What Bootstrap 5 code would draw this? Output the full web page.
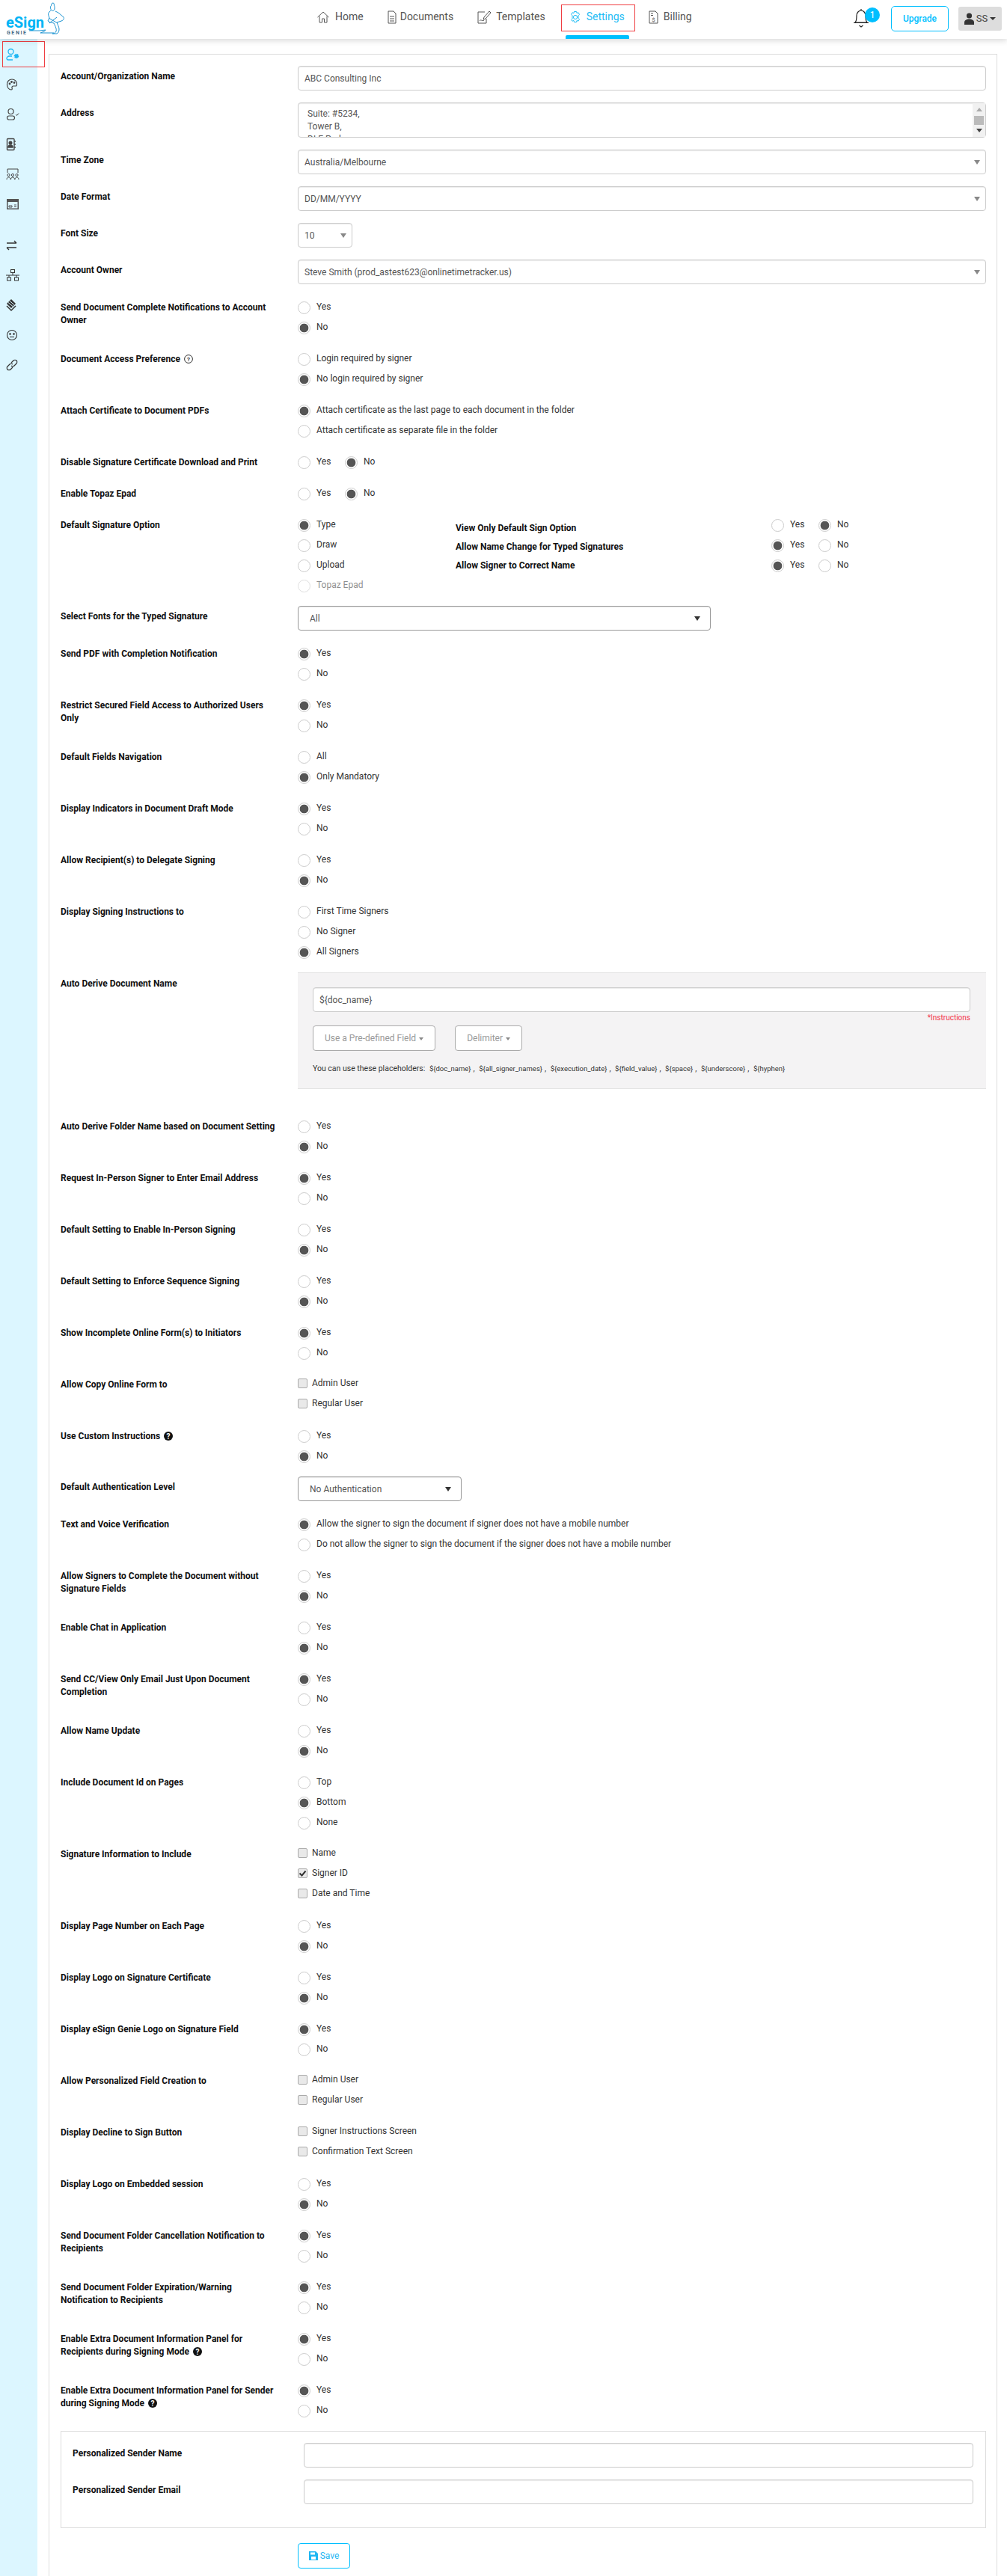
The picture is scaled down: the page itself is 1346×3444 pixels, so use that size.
<!DOCTYPE html>
<html lang="en">
<head>
<meta charset="UTF-8">
<title>eSign Genie - Settings</title>
<link href="https://cdn.jsdelivr.net/npm/bootstrap@5.3.0/dist/css/bootstrap.min.css" rel="stylesheet">
<style>
  body { font-family: Roboto, "Liberation Sans", sans-serif; font-size: 12px; color: #555; background: #fff; width: 1346px; height: 3444px; overflow: hidden; }
  .top-bar { height: 52px; padding: 0; background: #fff; box-shadow: 0 2px 8px rgba(0,0,0,.16); position: relative; z-index: 5; flex-wrap: nowrap; justify-content: flex-start; }
  .brand-box { width: 423px; height: 52px; flex: none; position: relative; }
  .brand-word { position: absolute; left: 8px; top: 16px; font-size: 20px; font-weight: 700; color: #00b4f5; line-height: 28px; }
  .brand-sub { position: absolute; left: 9px; top: 40px; font-size: 7px; font-weight: 700; color: #4a6f8a; letter-spacing: 1.6px; line-height: 8px; }
  .brand-genie { position: absolute; left: 38px; top: 3px; }
  .main-links { gap: 32px; flex-direction: row; flex-wrap: nowrap; }
  .main-links .nav-link { padding: 0 0 7px; height: 52px; display: flex; align-items: center; gap: 7px; color: #555; font-size: 14px; position: relative; }
  .main-links .nav-link svg { flex: none; }
  .main-links .nav-link.on { color: #1fbdf5; }
  .main-links .nav-link.on::before { content: ""; position: absolute; left: -11px; right: -14px; top: 6px; height: 36px; border: 1px solid #ef3e42; }
  .main-links .nav-link.on::after { content: ""; position: absolute; left: -5px; right: -6px; bottom: 0; height: 5px; background: #00bfff; border-radius: 2px 2px 0 0; }
  .bell-wrap { position: absolute; left: 1140px; top: 11px; width: 24px; height: 26px; }
  .bell-count { position: absolute; left: 16px; top: -1px; width: 20px; height: 20px; border-radius: 50%; background: #00bfff; color: #fff; font-size: 12px; line-height: 20px; text-align: center; }
  .upgrade-btn { position: absolute; left: 1191px; top: 8px; width: 77px; height: 34px; padding: 0; font-size: 12px; font-weight: 500; color: #00bfff; border: 1px solid #00bfff; border-radius: 5px; background: #fff; }
  .who-btn { position: absolute; left: 1281px; top: 9px; width: 58px; height: 32px; padding: 0; display: flex; align-items: center; justify-content: center; gap: 3px; font-size: 13px; color: #444; background: #ddd; border: 0; border-radius: 3px; }
  .who-btn::after { content: ""; border-top: 4px solid #333; border-left: 4px solid transparent; border-right: 4px solid transparent; }
  .side-rail { width: 50px; flex: none; background: #dcf6ff; padding-top: 1px; position: relative; }
  .rail-item { height: 40px; display: flex; align-items: center; padding-left: 8px; color: #444; position: relative; }
  .rail-item.on { color: #1fb6f2; }
  .rail-item.on::before { content: ""; position: absolute; left: 3px; top: 2px; width: 57px; height: 35px; border: 1px solid #ef3e42; }
  .rail-item.gap-after { margin-bottom: 15px; }
  .work-area { flex: 1; padding: 20px 13px 0 15px; min-width: 0; }
  .cfg-panel { border: 1px solid #ddd; border-bottom: 0; padding: 17px 14px 0 15px; height: 3400px; }
  .cfg-row { display: flex; margin-bottom: 15px; }
  .cfg-row.with-field { margin-top: -2px; margin-bottom: 18px; }
  .cfg-name { width: 317px; flex: none; padding: 5px 29px 0 0; font-weight: 700; font-size: 12px; line-height: 17px; color: #111; margin: 0; }
  .with-field .cfg-name { padding-top: 6px; }
  .cfg-body { flex: 1; min-width: 0; }
  .opt-line { display: flex; align-items: center; gap: 8px; height: 27px; min-height: 0; padding: 0; margin: 0; color: #333; }
  .opt-line .form-check-input { float: none; margin: 0; flex: none; }
  .opt-line .form-check-label { line-height: 17px; position: relative; top: -1px; }
  .opt-line input[type=radio] { width: 17px; height: 17px; border: 1px solid #ccc; background: #fff; }
  .opt-line input[type=radio]:checked { background: radial-gradient(circle, #555 0, #555 5.500px, #fff 6.200px); border-color: #ccc; }
  .opt-line input[type=radio]:disabled { opacity: .6; }
  .opt-line input[type=radio]:disabled ~ label { opacity: .55; }
  .opt-line.tick-line { gap: 6px; }
  .opt-line input[type=checkbox] { width: 13px; height: 13px; margin-top: -4px; border: 1px solid #aaa; border-radius: 2px; background-color: #e9e9e9; }
  .opt-line input[type=checkbox]:checked { background-color: #e9e9e9; border-color: #aaa; background-size: 13px; background-image: url("data:image/svg+xml,%3Csvg xmlns='http://www.w3.org/2000/svg' viewBox='0 0 13 13'%3E%3Cpath d='M2.500 6.500l3 3 5-6' fill='none' stroke='%23333' stroke-width='2'/%3E%3C/svg%3E"); }
  .tick-line .form-check-label { top: -2px; }
  .opt-across { display: flex; }
  .opt-across .opt-line { width: 63px; }
  .cfg-input, .cfg-select { height: 33px; padding: 0 8px; font-size: 12px; color: #555; border: 1px solid #ccc; border-radius: 4px; box-shadow: inset 0 1px 1px rgba(0,0,0,.08); }
  .cfg-select { background-image: url("data:image/svg+xml,%3Csvg xmlns='http://www.w3.org/2000/svg' width='8' height='6'%3E%3Cpath d='M0 0h8L4 6z' fill='%23888'/%3E%3C/svg%3E"); background-position: right 7px center; background-size: 8px 6px; padding-right: 20px; }
  .cfg-select.dark { background-image: url("data:image/svg+xml,%3Csvg xmlns='http://www.w3.org/2000/svg' width='8' height='6'%3E%3Cpath d='M0 0h8L4 6z' fill='%23333'/%3E%3C/svg%3E"); border-color: #999; padding-left: 15px; background-position: right 13px center; }
  .cfg-text { height: 47px; padding: 6px 12px; line-height: 17px; font-size: 12px; color: #555; border: 1px solid #ccc; border-radius: 4px; box-shadow: inset 0 1px 1px rgba(0,0,0,.08); resize: none; overflow: hidden; }
  .fake-scroll { position: absolute; right: 1px; top: 1px; bottom: 1px; width: 17px; background: #f1f1f1; }
  .fake-scroll i { position: absolute; left: 2px; top: 17px; width: 13px; height: 12px; background: #bbb; }
  .fake-scroll::before { content: ""; position: absolute; left: 5px; top: 6px; border-bottom: 5px solid #aaa; border-left: 4px solid transparent; border-right: 4px solid transparent; }
  .fake-scroll::after { content: ""; position: absolute; left: 5px; bottom: 6px; border-top: 5px solid #444; border-left: 4px solid transparent; border-right: 4px solid transparent; }
  .w-font { width: 73px; }
  .w-fonts { width: 552px; }
  .w-auth { width: 219px; }
  .sign-extra { display: flex; }
  .sign-types { width: 211px; flex: none; }
  .sign-names { width: 422px; flex: none; padding-top: 9px; font-weight: 700; color: #111; line-height: 17px; }
  .sign-names div { height: 25px; }
  .cfg-row.derive-row { margin-bottom: 37px; }
  .derive-row .cfg-name { padding-top: 7px; }
  .derive-box { height: 156px; padding: 19px 21px 0 20px; background: #f4f3f4; border: 1px solid #e3e3e3; border-width: 1px 0; }
  .derive-note { text-align: right; color: #f3334a; font-size: 10px; line-height: 14px; margin-top: 1px; }
  .derive-btn { height: 34px; padding: 0 15px; margin-right: 26px; margin-top: 3px; font-size: 12px; color: #999; background: #fff; border: 1px solid #aaa; border-radius: 4px; white-space: nowrap; }
  .derive-btn::after { content: ""; display: inline-block; margin-left: 4px; vertical-align: 1px; border-top: 4px solid #888; border-left: 3px solid transparent; border-right: 3px solid transparent; }
  .derive-tips { font-size: 10.500px; color: #333; line-height: 14px; margin-top: 17px; white-space: nowrap; }
  .derive-tips span { font-size: 9.500px; margin-left: 3px; margin-right: 3px; }
  .sender-box { border: 1px solid #ddd; height: 130px; padding: 17px 16px 0 15px; margin-top: -2px; }
  .sender-box .cfg-name { width: 309px; }
  .save-btn { display: flex; align-items: center; justify-content: center; gap: 3px; width: 70px; height: 34px; padding: 0; margin: 20px 0 0 317px; font-size: 12px; color: #1fb6f2; border: 1px solid #00bfff; border-radius: 4px; background: #fff; }
  .hint-ico { vertical-align: -2px; margin-left: 2px; }
</style>
</head>
<body>

<nav class="navbar top-bar">
  <div class="brand-box">
    <span class="brand-word">eSign</span>
    <span class="brand-sub">GENIE</span>
    <svg class="brand-genie" width="50" height="43" viewBox="0 0 50 43" fill="none" stroke="#1b93d1" stroke-width="1"><path d="M33 1c-2 0-3 2-2 3-2 1-2 5 0 7 2 1 4 0 4-3 0-2 0-3-1-4 1-1 0-3-1-3zM30 11l-3 3c-1 2 0 4 1 7l-2 4c2 2 5 2 8 3 2 4 4 8 3 11-1 2-3 3-5 3h6c2-1 3-3 3-6 0-3-2-6-3-9l6-2c3-1 4-3 3-5l-7-6-4-2M27 21l12 7M28 28l10-8"/><path d="M1 38h14l8-1-2 2-5 2h18"/></svg>
  </div>
  <ul class="nav main-links">
    <li class="nav-item"><a class="nav-link" href="#"><svg width="18" height="18" viewBox="0 0 18 18" fill="none" stroke="currentColor"><path d="M1.500 9L9 2l7.500 7M4 7.500V16h3.500v-5h3v5H14V7.500"/></svg>Home</a></li>
    <li class="nav-item"><a class="nav-link" href="#"><svg width="12" height="18" viewBox="0 0 12 18" fill="none" stroke="currentColor" style="margin-right:-2px"><path d="M1 1h7l3 3v13H1zM3 8h6M3 11h6M3 14h6"/></svg>Documents</a></li>
    <li class="nav-item"><a class="nav-link" href="#"><svg width="18" height="18" viewBox="0 0 18 18" fill="none" stroke="currentColor"><path d="M10 2H1v15h11v-6M16 1l-7 8-1 3 3-1 7-8zM3 14c2-3 3 1 6-1"/></svg>Templates</a></li>
    <li class="nav-item"><a class="nav-link on" href="#"><svg width="16" height="18" viewBox="0 0 16 18" fill="none" stroke="currentColor"><circle cx="8" cy="9" r="2.600"/><path d="M6.500 1.500h3l.5 2 2-.7 1.500 2.500-1.500 1.500v3.400l1.500 1.500-1.500 2.500-2-.7-.5 2h-3l-.5-2-2 .7L2.500 12.700 4 11.200V6.800L2.500 5.300 4 2.800l2 .7z"/></svg>Settings</a></li>
    <li class="nav-item"><a class="nav-link" href="#"><svg width="13" height="18" viewBox="0 0 13 18" fill="none" stroke="currentColor"><path d="M1 1h8l3 3v13H1zM3 4h3M3 6.500h3"/><text x="6.500" y="14.500" font-size="8" fill="currentColor" stroke="none" text-anchor="middle">$</text></svg>Billing</a></li>
  </ul>
  <div class="bell-wrap">
    <svg width="24" height="26" viewBox="0 0 24 26" fill="none" stroke="#222" stroke-width="1.200"><path d="M11 1v2M3 19c2-2 2-5 2-9s3-7 6-7 6 3 6 7 0 7 2 9zM1 19.500h20M8.500 23l2.500 2 2.500-2"/></svg>
    <span class="bell-count">1</span>
  </div>
  <button class="upgrade-btn btn" type="button">Upgrade</button>
  <button class="who-btn btn" type="button"><svg width="13" height="16" viewBox="0 0 13 16" fill="#333"><circle cx="6.500" cy="4" r="3.600"/><path d="M0 16v-3c0-3 3-4.500 6.500-4.500S13 10 13 13v3z"/></svg>SS</button>
</nav>

<div class="d-flex" style="min-height:3392px">
  <aside class="side-rail">
    <div class="rail-item on"><svg width="18" height="18" viewBox="0 0 18 18" fill="none" stroke="currentColor" stroke-width="1.300"><circle cx="6.500" cy="5" r="3.500"/><path d="M9 16H3c-1.500 0-2-1-2-2s1-3 4-3h3"/><circle cx="14" cy="11" r="2.500" fill="currentColor" stroke-width="1.500" stroke-dasharray="1.500 1"/></svg></div>
    <div class="rail-item"><svg width="16" height="18" viewBox="0 0 16 18" fill="none" stroke="currentColor" stroke-width="1.200"><path d="M8 2C4 2 1.500 5 1.500 9S4 16 7 16c1.500 0 1.500-1.500 1-2.500S8.500 11 10 11h3c1 0 1.500-1 1.500-2.500C14.500 5 12 2 8 2z"/><circle cx="5" cy="8" r=".8" fill="currentColor"/><circle cx="7.500" cy="5.500" r=".8" fill="currentColor"/><circle cx="11" cy="6.500" r=".8" fill="currentColor"/></svg></div>
    <div class="rail-item"><svg width="18" height="18" viewBox="0 0 18 18" fill="none" stroke="currentColor" stroke-width="1.200"><circle cx="6.500" cy="5" r="3.500"/><rect x="1.500" y="11" width="10" height="5" rx="2.500"/><path d="M13 9l1.500 1.500L17 7.500" stroke-width="1"/></svg></div>
    <div class="rail-item"><svg width="14" height="18" viewBox="0 0 14 18" fill="none" stroke="currentColor" stroke-width="1.400"><rect x="1.500" y="1.500" width="9.500" height="15" rx="1"/><circle cx="6" cy="7" r="1.800" fill="currentColor"/><path d="M3 13c0-4 6-4 6 0z" fill="currentColor"/><path d="M12 4v2M12 8v2M12 12v2"/></svg></div>
    <div class="rail-item"><svg width="18" height="18" viewBox="0 0 18 18" fill="none" stroke="currentColor"><path d="M2 7V2h14v5"/><circle cx="3.500" cy="10" r="1.600"/><circle cx="9" cy="10" r="1.600"/><circle cx="14.500" cy="10" r="1.600"/><path d="M1 16c0-4 5-4 5 0M6.500 16c0-4 5-4 5 0M12 16c0-4 5-4 5 0"/></svg></div>
    <div class="rail-item gap-after"><svg width="18" height="18" viewBox="0 0 18 18" fill="none" stroke="currentColor"><rect x="1.500" y="2.500" width="15" height="13" fill="#555" stroke="#555"/><rect x="2.500" y="6" width="13" height="8.500" fill="#dcf6ff" stroke="none"/><path d="M4 11h4v2H4zM11 10h3M11 12.500h3" stroke="#555"/></svg></div>
    <div class="rail-item"><svg width="16" height="16" viewBox="0 0 16 16" fill="none" stroke="#333" stroke-width="1.400"><path d="M1 5h13M11 2l3 3M1 11h13M4 14l-3-3"/></svg></div>
    <div class="rail-item"><svg width="18" height="18" viewBox="0 0 18 18" fill="none" stroke="#333"><rect x="6.500" y="1.500" width="5" height="4"/><rect x="1.500" y="12" width="5" height="4"/><rect x="11.500" y="12" width="5" height="4"/><path d="M9 5.500V9M0 9h18M4 9v3M14 9v3"/></svg></div>
    <div class="rail-item"><svg width="14" height="18" viewBox="0 0 14 18" fill="#333"><path d="M7 1l6 6-6 6-6-6z"/><path d="M1 10l6 6 6-6" fill="none" stroke="#333" stroke-width="1.500"/><path d="M3 5.500l6 5M5 3.500l6 5" stroke="#dcf6ff"/></svg></div>
    <div class="rail-item"><svg width="16" height="16" viewBox="0 0 16 16" fill="none" stroke="#333" stroke-width="1.100"><circle cx="8" cy="8" r="6.500"/><circle cx="5.500" cy="6.500" r=".8" fill="#333"/><circle cx="10.500" cy="6.500" r=".8" fill="#333"/><path d="M5 10.500h6"/></svg></div>
    <div class="rail-item"><svg width="16" height="16" viewBox="0 0 16 16" fill="none" stroke="#333" stroke-width="1.200"><path d="M7 5l3-3c1-1 3-1 4 0s1 3 0 4l-3 3c-1 1-3 1-4 0M9 11l-3 3c-1 1-3 1-4 0s-1-3 0-4l3-3c1-1 3-1 4 0"/></svg></div>
  </aside>

  <main class="work-area">
    <form class="cfg-panel" id="cfgForm" onsubmit="return false"></form>
  </main>
</div>

<script src="https://cdn.jsdelivr.net/npm/bootstrap@5.3.0/dist/js/bootstrap.bundle.min.js"></script>
<script>
  const ringHelp = '<svg class="hint-ico" width="12" height="12" viewBox="0 0 12 12"><circle cx="6" cy="6" r="5.400" fill="none" stroke="#333"/><text x="6" y="9" font-size="8" text-anchor="middle" fill="#333">?</text></svg>';
  const solidHelp = '<svg class="hint-ico" width="12" height="12" viewBox="0 0 12 12"><circle cx="6" cy="6" r="6" fill="#111"/><text x="6" y="9.500" font-size="10" font-weight="700" text-anchor="middle" fill="#fff">?</text></svg>';
  const yesNo = ['Yes', 'No'];
  let uid = 0;

  // one radio or checkbox line
  function opt(text, on, kind, off) {
    const id = 'o' + (++uid);
    return `<div class="form-check opt-line ${kind === 'checkbox' ? 'tick-line' : ''}">
      <input class="form-check-input" type="${kind}" id="${id}" name="g${kind === 'radio' ? opt.group : id}" ${on ? 'checked' : ''} ${off ? 'disabled' : ''}>
      <label class="form-check-label" for="${id}">${text}</label></div>`;
  }
  function radios(list, on, across) {
    opt.group = ++uid;
    const body = list.map((t, i) => opt(t, i === on, 'radio', t === 'Topaz Epad')).join('');
    return across ? `<div class="opt-across">${body}</div>` : body;
  }
  function ticks(list, on) {
    return list.map((t, i) => opt(t, i === on, 'checkbox')).join('');
  }
  function row(name, body, field) {
    return `<div class="cfg-row ${field ? 'with-field' : ''}"><label class="cfg-name">${name}</label><div class="cfg-body">${body}</div></div>`;
  }
  function pick(text, extra) {
    return `<select class="form-select cfg-select ${extra || ''}"><option>${text}</option></select>`;
  }

  const fields = [
    row('Account/Organization Name', '<input class="form-control cfg-input" value="ABC Consulting Inc">', 1),
    row('Address', '<div class="position-relative"><textarea class="form-control cfg-text">Suite: #5234,\nTower B,\nDLF Park</textarea><div class="fake-scroll"><i></i></div></div>', 1),
    row('Time Zone', pick('Australia/Melbourne'), 1),
    row('Date Format', pick('DD/MM/YYYY'), 1),
    row('Font Size', pick('10', 'w-font'), 1),
    row('Account Owner', pick('Steve Smith (prod_astest623@onlinetimetracker.us)'), 1),
    row('Send Document Complete Notifications to Account Owner', radios(yesNo, 1)),
    row('Document Access Preference ' + ringHelp, radios(['Login required by signer', 'No login required by signer'], 1)),
    row('Attach Certificate to Document PDFs', radios(['Attach certificate as the last page to each document in the folder', 'Attach certificate as separate file in the folder'], 0)),
    row('Disable Signature Certificate Download and Print', radios(yesNo, 1, true)),
    row('Enable Topaz Epad', radios(yesNo, 1, true)),
    row('Default Signature Option', `<div class="sign-extra">
      <div class="sign-types">${radios(['Type', 'Draw', 'Upload', 'Topaz Epad'], 0)}</div>
      <div class="sign-names"><div>View Only Default Sign Option</div><div>Allow Name Change for Typed Signatures</div><div>Allow Signer to Correct Name</div></div>
      <div>${radios(yesNo, 1, true)}${radios(yesNo, 0, true)}${radios(yesNo, 0, true)}</div></div>`),
    row('Select Fonts for the Typed Signature', pick('All', 'w-fonts dark'), 1),
    row('Send PDF with Completion Notification', radios(yesNo, 0)),
    row('Restrict Secured Field Access to Authorized Users Only', radios(yesNo, 0)),
    row('Default Fields Navigation', radios(['All', 'Only Mandatory'], 1)),
    row('Display Indicators in Document Draft Mode', radios(yesNo, 0)),
    row('Allow Recipient(s) to Delegate Signing', radios(yesNo, 1)),
    row('Display Signing Instructions to', radios(['First Time Signers', 'No Signer', 'All Signers'], 2)),
    `<div class="cfg-row with-field derive-row"><label class="cfg-name">Auto Derive Document Name</label><div class="cfg-body"><div class="derive-box">
      <input class="form-control cfg-input" value="\${doc_name}">
      <div class="derive-note">*Instructions</div>
      <div class="d-flex"><button class="btn derive-btn" type="button">Use a Pre-defined Field</button><button class="btn derive-btn" type="button">Delimiter</button></div>
      <div class="derive-tips">You can use these placeholders: <span>\${doc_name}</span>, <span>\${all_signer_names}</span>, <span>\${execution_date}</span>, <span>\${field_value}</span>, <span>\${space}</span>, <span>\${underscore}</span>, <span>\${hyphen}</span></div>
    </div></div></div>`,
    row('Auto Derive Folder Name based on Document Setting', radios(yesNo, 1)),
    row('Request In-Person Signer to Enter Email Address', radios(yesNo, 0)),
    row('Default Setting to Enable In-Person Signing', radios(yesNo, 1)),
    row('Default Setting to Enforce Sequence Signing', radios(yesNo, 1)),
    row('Show Incomplete Online Form(s) to Initiators', radios(yesNo, 0)),
    row('Allow Copy Online Form to', ticks(['Admin User', 'Regular User'])),
    row('Use Custom Instructions ' + solidHelp, radios(yesNo, 1)),
    row('Default Authentication Level', pick('No Authentication', 'w-auth dark'), 1),
    row('Text and Voice Verification', radios(['Allow the signer to sign the document if signer does not have a mobile number', 'Do not allow the signer to sign the document if the signer does not have a mobile number'], 0)),
    row('Allow Signers to Complete the Document without Signature Fields', radios(yesNo, 1)),
    row('Enable Chat in Application', radios(yesNo, 1)),
    row('Send CC/View Only Email Just Upon Document Completion', radios(yesNo, 0)),
    row('Allow Name Update', radios(yesNo, 1)),
    row('Include Document Id on Pages', radios(['Top', 'Bottom', 'None'], 1)),
    row('Signature Information to Include', ticks(['Name', 'Signer ID', 'Date and Time'], 1)),
    row('Display Page Number on Each Page', radios(yesNo, 1)),
    row('Display Logo on Signature Certificate', radios(yesNo, 1)),
    row('Display eSign Genie Logo on Signature Field', radios(yesNo, 0)),
    row('Allow Personalized Field Creation to', ticks(['Admin User', 'Regular User'])),
    row('Display Decline to Sign Button', ticks(['Signer Instructions Screen', 'Confirmation Text Screen'])),
    row('Display Logo on Embedded session', radios(yesNo, 1)),
    row('Send Document Folder Cancellation Notification to Recipients', radios(yesNo, 0)),
    row('Send Document Folder Expiration/Warning Notification to Recipients', radios(yesNo, 0)),
    row('Enable Extra Document Information Panel for Recipients during Signing Mode ' + solidHelp, radios(yesNo, 0)),
    row('Enable Extra Document Information Panel for Sender during Signing Mode ' + solidHelp, radios(yesNo, 0)),
    `<div class="sender-box">
      ${row('Personalized Sender Name', '<input class="form-control cfg-input">', 1)}
      ${row('Personalized Sender Email', '<input class="form-control cfg-input">', 1)}
    </div>`,
    `<button class="btn save-btn" type="button"><svg width="12" height="12" viewBox="0 0 12 12" fill="#1fb6f2"><path d="M0 0h9l3 3v9H0zM2 1.500v3h6v-3zM3 7v4h6V7z" fill-rule="evenodd"/></svg>Save</button>`
  ];
  document.getElementById('cfgForm').innerHTML = fields.join('');
</script>
</body>
</html>
